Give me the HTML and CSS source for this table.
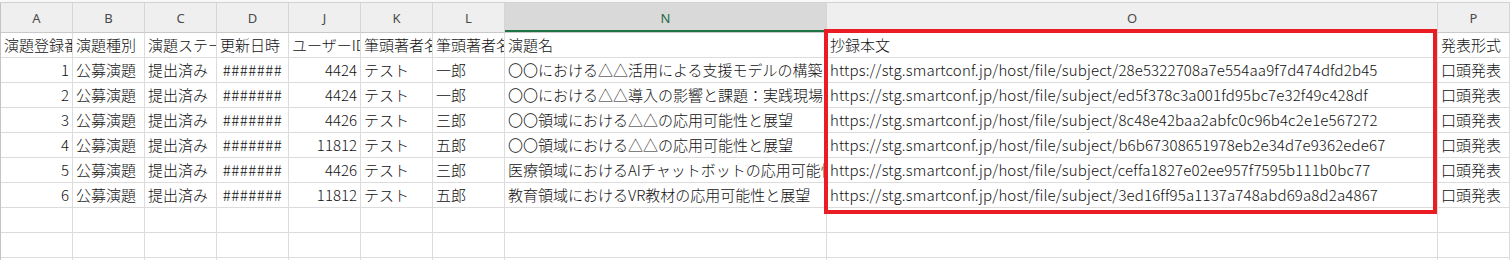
FILE: index.html
```html
<!DOCTYPE html>
<html lang="ja">
<head>
<meta charset="utf-8">
<link rel="stylesheet" href="styles.css">
</head>
<body>
<div class="window">
  <div class="topstrip"></div>
  <div class="sheet">
    <div class="ch">A</div><div class="ch">B</div><div class="ch">C</div><div class="ch">D</div><div class="ch">J</div><div class="ch">K</div><div class="ch">L</div><div class="ch sel">N</div><div class="ch">O</div><div class="ch">P</div>

    <div class="c">演題登録番号</div><div class="c">演題種別</div><div class="c">演題ステータス</div><div class="c">更新日時</div><div class="c">ユーザーID</div><div class="c">筆頭著者名</div><div class="c">筆頭著者名</div><div class="c">演題名</div><div class="c">抄録本文</div><div class="c">発表形式</div>

    <div class="c r">1</div><div class="c">公募演題</div><div class="c">提出済み</div><div class="c h">#######</div><div class="c r">4424</div><div class="c">テスト</div><div class="c">一郎</div><div class="c">〇〇における△△活用による支援モデルの構築</div><div class="c u">https://stg.smartconf.jp/host/file/subject/28e5322708a7e554aa9f7d474dfd2b45</div><div class="c">口頭発表</div>

    <div class="c r">2</div><div class="c">公募演題</div><div class="c">提出済み</div><div class="c h">#######</div><div class="c r">4424</div><div class="c">テスト</div><div class="c">一郎</div><div class="c">〇〇における△△導入の影響と課題：実践現場からの報告</div><div class="c u">https://stg.smartconf.jp/host/file/subject/ed5f378c3a001fd95bc7e32f49c428df</div><div class="c">口頭発表</div>

    <div class="c r">3</div><div class="c">公募演題</div><div class="c">提出済み</div><div class="c h">#######</div><div class="c r">4426</div><div class="c">テスト</div><div class="c">三郎</div><div class="c">〇〇領域における△△の応用可能性と展望</div><div class="c u">https://stg.smartconf.jp/host/file/subject/8c48e42baa2abfc0c96b4c2e1e567272</div><div class="c">口頭発表</div>

    <div class="c r">4</div><div class="c">公募演題</div><div class="c">提出済み</div><div class="c h">#######</div><div class="c r">11812</div><div class="c">テスト</div><div class="c">五郎</div><div class="c">〇〇領域における△△の応用可能性と展望</div><div class="c u">https://stg.smartconf.jp/host/file/subject/b6b67308651978eb2e34d7e9362ede67</div><div class="c">口頭発表</div>

    <div class="c r">5</div><div class="c">公募演題</div><div class="c">提出済み</div><div class="c h">#######</div><div class="c r">4426</div><div class="c">テスト</div><div class="c">三郎</div><div class="c">医療領域におけるAIチャットボットの応用可能性</div><div class="c u">https://stg.smartconf.jp/host/file/subject/ceffa1827e02ee957f7595b111b0bc77</div><div class="c">口頭発表</div>

    <div class="c r">6</div><div class="c">公募演題</div><div class="c">提出済み</div><div class="c h">#######</div><div class="c r">11812</div><div class="c">テスト</div><div class="c">五郎</div><div class="c">教育領域におけるVR教材の応用可能性と展望</div><div class="c u">https://stg.smartconf.jp/host/file/subject/3ed16ff95a1137a748abd69a8d2a4867</div><div class="c">口頭発表</div>

    <div class="c"></div><div class="c"></div><div class="c"></div><div class="c"></div><div class="c"></div><div class="c"></div><div class="c"></div><div class="c"></div><div class="c"></div><div class="c"></div>
    <div class="c"></div><div class="c"></div><div class="c"></div><div class="c"></div><div class="c"></div><div class="c"></div><div class="c"></div><div class="c"></div><div class="c"></div><div class="c"></div>
    <div class="c"></div><div class="c"></div><div class="c"></div><div class="c"></div><div class="c"></div><div class="c"></div><div class="c"></div><div class="c"></div><div class="c"></div><div class="c"></div>
  </div>
  <div class="highlight"></div>
</div>
</body>
</html>
```
FILE: styles.css
```css
html, body {
  margin: 0;
  padding: 0;
  background: #ffffff;
}
body {
  width: 1510px;
  height: 260px;
  overflow: hidden;
}
.window {
  position: relative;
  width: 1510px;
  height: 260px;
  overflow: hidden;
}
.topstrip {
  height: 2px;
  background: #f8f8f8;
  border-bottom: 1px solid #d2d2d2;
}
.sheet {
  display: grid;
  grid-template-columns: 72px 72px 72px 72px 72px 72px 72px 322px 611px 1fr;
  grid-auto-rows: 25px;
  grid-template-rows: 30px;
  border-left: 1px solid #c4c4c4;
  font-family: "Noto Sans CJK JP", "Noto Sans", sans-serif;
  font-size: 15px;
  font-weight: 300;
  color: #111111;
}
.ch {
  box-sizing: border-box;
  background: #efefef;
  border-right: 1px solid #d6d6d6;
  border-bottom: 1px solid #c9c9c9;
  display: flex;
  align-items: center;
  justify-content: center;
  font-family: "Noto Sans", "Open Sans", sans-serif;
  font-size: 13px;
  font-weight: 400;
  color: #4a4a4a;
}
.ch.sel {
  background: #d9d9d9;
  color: #1d6b41;
  box-shadow: inset 0 -2px 0 #217346;
}
.c {
  box-sizing: border-box;
  border-right: 1px solid #dcdcdc;
  border-bottom: 1px solid #dcdcdc;
  padding: 0 3px;
  white-space: nowrap;
  overflow: hidden;
  line-height: 24px;
}
.c.r {
  text-align: right;
}
.c.h {
  text-align: center;
  letter-spacing: 0.5px;
  padding: 0;
}
.c.u {
  letter-spacing: 0.15px;
}
.highlight {
  position: absolute;
  left: 824px;
  top: 29px;
  width: 613px;
  height: 185px;
  box-sizing: border-box;
  border: 4px solid #ea1c24;
  pointer-events: none;
}
```
